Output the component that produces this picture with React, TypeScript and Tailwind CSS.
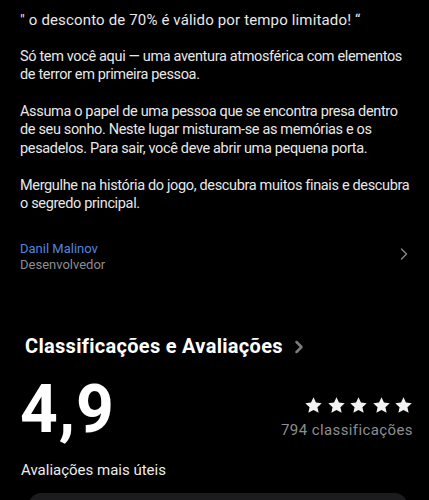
import { ChevronRight } from "lucide-react";

// each paragraph is kept with the same line breaks as the store page
const PARAGRAPHS = [
  ["\" o desconto de 70% é válido por tempo limitado! \u201C"],
  ["Só tem você aqui — uma aventura atmosférica com elementos", "de terror em primeira pessoa."],
  [
    "Assuma o papel de uma pessoa que se encontra presa dentro",
    "de seu sonho. Neste lugar misturam-se as memórias e os",
    "pesadelos. Para sair, você deve abrir uma pequena porta.",
  ],
  ["Mergulhe na história do jogo, descubra muitos finais e descubra", "o segredo principal."],
];

function Star() {
  return (
    <svg viewBox="0 0 24 24" className="w-[19px] h-[19px]" fill="#f2f2f2">
      <path d="M12 1.6l3.1 6.7 7.3.8-5.45 5 1.55 7.2L12 17.7l-6.5 3.6 1.55-7.2L1.6 9.1l7.3-.8z" />
    </svg>
  );
}

export default function App() {
  return (
    <div className="w-[429px] h-[500px] bg-black text-[#e8e8e8] overflow-hidden font-['Roboto',sans-serif]">
      {/* --- Description --- */}
      <div className="pl-[20px] pt-[11px] text-[14.5px] leading-[18.4px] tracking-[-0.35px]">
        {PARAGRAPHS.map((lines, i) => (
          <p key={i} className={i === 0 ? "mb-[18.4px] text-[15px] tracking-[0.15px]" : "mb-[18.4px]"}>
            {lines.map((l) => (
              <span key={l} className="block whitespace-nowrap">
                {l}
              </span>
            ))}
          </p>
        ))}
      </div>

      {/* --- Developer --- */}
      <div className="flex items-center justify-between pl-[20px] pr-[15px] mt-[28px]">
        <div className="flex flex-col text-[13px] leading-[16px]">
          <span className="text-[#4f86e0]">Danil Malinov</span>
          <span className="text-[#8d8d92]">Desenvolvedor</span>
        </div>
        <ChevronRight size={20} strokeWidth={1.6} className="text-[#8a8a8e] mb-[6px]" />
      </div>

      {/* --- Ratings header --- */}
      <div className="flex items-center gap-[6px] pl-[25px] mt-[58px]">
        <h2 className="text-[20px] font-bold text-white tracking-[0.3px]">Classificações e Avaliações</h2>
        <ChevronRight size={20} strokeWidth={3} className="text-[#7c7c80] mt-[1px]" />
      </div>

      <div className="flex items-start justify-between pl-[20px] pr-[16px] mt-[16px]">
        <div className="text-[66px] font-bold text-white leading-[66px] tracking-[1px]">4,9</div>
        <div className="flex flex-col items-end mt-[19px]">
          <div className="flex gap-[3.5px]">
            <Star />
            <Star />
            <Star />
            <Star />
            <Star />
          </div>
          <span className="text-[15px] text-[#8d8d92] tracking-[0.4px] mt-[4px]">794 classificações</span>
        </div>
      </div>

      <div className="pl-[21px] mt-[16px] text-[15px] text-[#ececec]">Avaliações mais úteis</div>

      {/* --- Review card --- */}
      <div className="ml-[29px] mr-[22px] mt-[11px] h-[80px] rounded-[12px] bg-[#1c1c1e]" />
    </div>
  );
}
